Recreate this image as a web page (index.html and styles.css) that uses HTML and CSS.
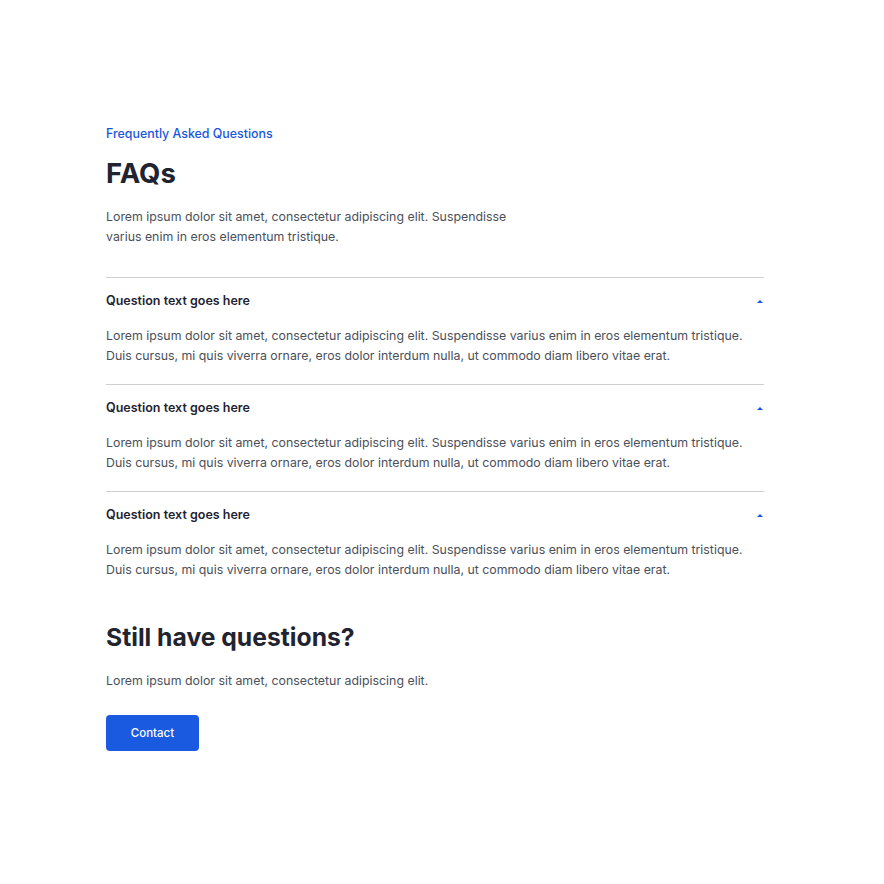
FILE: index.html
```html
<!DOCTYPE html>
<html lang="en">
<head>
    <meta charset="UTF-8">
    <meta name="viewport" content="width=device-width, initial-scale=1.0">
    <title>FAQs</title>
    <link rel="stylesheet" href="styles.css">
</head>
<body>
    <div class="faq-page">
        <!-- Header -->
        <div class="faq-header">
            <p class="tagline">Frequently Asked Questions</p>
            <h1>FAQs</h1>
            <p class="intro">Lorem ipsum dolor sit amet, consectetur adipiscing elit. Suspendisse varius enim in eros elementum tristique.</p>
        </div>

        <!-- Questions -->
        <div class="faq-list">
            <div class="faq-item">
                <div class="faq-question">
                    <span>Question text goes here</span>
                    <span class="caret"></span>
                </div>
                <p class="faq-answer">Lorem ipsum dolor sit amet, consectetur adipiscing elit. Suspendisse varius enim in eros elementum tristique. Duis cursus, mi quis viverra ornare, eros dolor interdum nulla, ut commodo diam libero vitae erat.</p>
            </div>
            <div class="faq-item">
                <div class="faq-question">
                    <span>Question text goes here</span>
                    <span class="caret"></span>
                </div>
                <p class="faq-answer">Lorem ipsum dolor sit amet, consectetur adipiscing elit. Suspendisse varius enim in eros elementum tristique. Duis cursus, mi quis viverra ornare, eros dolor interdum nulla, ut commodo diam libero vitae erat.</p>
            </div>
            <div class="faq-item">
                <div class="faq-question">
                    <span>Question text goes here</span>
                    <span class="caret"></span>
                </div>
                <p class="faq-answer">Lorem ipsum dolor sit amet, consectetur adipiscing elit. Suspendisse varius enim in eros elementum tristique. Duis cursus, mi quis viverra ornare, eros dolor interdum nulla, ut commodo diam libero vitae erat.</p>
            </div>
        </div>

        <!-- Contact -->
        <div class="faq-contact">
            <h2>Still have questions?</h2>
            <p>Lorem ipsum dolor sit amet, consectetur adipiscing elit.</p>
            <button class="contact-button">Contact</button>
        </div>
    </div>
</body>
</html>
```

FILE: styles.css
```css
* {
    box-sizing: border-box;
    margin: 0;
    padding: 0;
}

body {
    font-family: Inter, 'Noto Sans', sans-serif;
    background-color: #ffffff;
    color: #1f2430;
}

.faq-page {
    width: 658px;
    margin-left: 106px;
    padding-top: 124px;
}

.tagline {
    font-size: 12.4px;
    line-height: 20px;
    font-weight: 500;
    color: #1a56db;
}

.faq-header h1 {
    font-size: 27.5px;
    line-height: 36px;
    font-weight: 700;
    margin-top: 11px;
    color: #1f2430;
}

.intro {
    font-size: 12.35px;
    line-height: 20px;
    color: #4a4f59;
    max-width: 420px;
    margin-top: 16px;
}

.faq-list {
    margin-top: 30px;
}

.faq-item {
    border-top: 1px solid #cfcfd2;
}

.faq-question {
    display: flex;
    justify-content: space-between;
    align-items: center;
    padding: 13px 0 15px;
    font-size: 12.5px;
    line-height: 20px;
    font-weight: 600;
    color: #1f2430;
}

.caret {
    width: 0;
    height: 0;
    border-left: 3px solid transparent;
    border-right: 3px solid transparent;
    border-bottom: 3px solid #1a56db;
    margin-right: 1px;
}

.faq-answer {
    max-width: 650px;
    font-size: 12.35px;
    line-height: 20px;
    color: #4a4f59;
    padding-bottom: 18px;
}

.faq-contact {
    margin-top: 23px;
}

.faq-contact h2 {
    font-size: 24.7px;
    line-height: 32px;
    font-weight: 700;
    color: #1f2430;
}

.faq-contact p {
    font-size: 12.35px;
    line-height: 20px;
    color: #4a4f59;
    margin-top: 18px;
}

.contact-button {
    margin-top: 24px;
    width: 93px;
    height: 36px;
    background-color: #1a5ae0;
    color: #ffffff;
    border: none;
    border-radius: 4px;
    font-family: inherit;
    font-size: 11.5px;
    font-weight: 500;
    cursor: pointer;
}
```
